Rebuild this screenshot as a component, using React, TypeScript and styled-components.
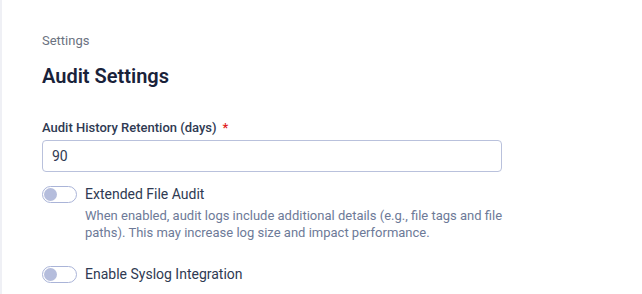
import React, { useState } from 'react';
import styled, { createGlobalStyle } from 'styled-components';

const GlobalStyle = createGlobalStyle`
  html, body {
    margin: 0;
    padding: 0;
    background: #ffffff;
    font-family: Roboto, 'Liberation Sans', Arial, sans-serif;
  }
`;

const Page = styled.div`
  display: flex;
  min-height: 294px;
  overflow: hidden;
`;

const EdgeStrip = styled.div`
  width: 2px;
  flex-shrink: 0;
  background: #eff0f5;
`;

const Content = styled.main`
  flex: 1;
  padding: 33px 0 0 40px;
`;

const Breadcrumb = styled.div`
  font-size: 13px;
  line-height: 16px;
  color: #6b7280;
`;

const Title = styled.h1`
  margin: 15px 0 0;
  font-size: 20px;
  line-height: 24px;
  font-weight: 600;
  color: #19223a;
`;

const Field = styled.div`
  margin-top: 32px;
  width: 460px;
`;

const Label = styled.label`
  display: block;
  font-size: 13px;
  line-height: 16px;
  font-weight: 500;
  color: #2f3a52;
`;

const Required = styled.span`
  color: #e11d1d;
  margin-left: 6px;
`;

const TextInput = styled.input`
  box-sizing: border-box;
  display: block;
  width: 460px;
  height: 32px;
  margin-top: 4px;
  padding: 0 9px;
  border: 1px solid #b9c1dc;
  border-radius: 4px;
  font-family: inherit;
  font-size: 14px;
  color: #2f3a52;
  outline: none;
`;

const ToggleRow = styled.div<{ $gap: number }>`
  display: flex;
  gap: 8px;
  margin-top: ${p => p.$gap}px;
`;

const Track = styled.button<{ $on: boolean }>`
  box-sizing: border-box;
  width: 35px;
  height: 17px;
  flex-shrink: 0;
  margin-top: 1px;
  padding: 0 1px;
  border: 1px solid #aab4d8;
  border-radius: 9px;
  background: ${p => (p.$on ? '#5b6fc4' : '#ffffff')};
  display: flex;
  align-items: center;
  justify-content: ${p => (p.$on ? 'flex-end' : 'flex-start')};
  cursor: pointer;
`;

const Knob = styled.span<{ $on: boolean }>`
  width: 13px;
  height: 13px;
  border-radius: 50%;
  background: ${p => (p.$on ? '#ffffff' : '#b5bddc')};
`;

const ToggleText = styled.div`
  display: flex;
  flex-direction: column;
`;

const ToggleLabel = styled.span`
  font-size: 14px;
  line-height: 18px;
  color: #2f3a52;
`;

const Help = styled.p`
  margin: 4px 0 0;
  width: 420px;
  font-size: 13px;
  line-height: 17px;
  color: #6d7a98;
`;

type ToggleProps = {
  label: string;
  help?: string;
  gap: number;
};

const Toggle: React.FC<ToggleProps> = ({ label, help, gap }) => {
  const [on, setOn] = useState(false);
  return (
    <ToggleRow $gap={gap}>
      <Track $on={on} onClick={() => setOn(!on)} aria-pressed={on}>
        <Knob $on={on} />
      </Track>
      <ToggleText>
        <ToggleLabel>{label}</ToggleLabel>
        {help && <Help>{help}</Help>}
      </ToggleText>
    </ToggleRow>
  );
};

const App: React.FC = () => {
  const [days, setDays] = useState('90');

  return (
    <Page>
      <GlobalStyle />
      <EdgeStrip />
      <Content>
        <Breadcrumb>Settings</Breadcrumb>
        <Title>Audit Settings</Title>
        <Field>
          <Label>
            Audit History Retention (days)
            <Required>*</Required>
          </Label>
          <TextInput value={days} onChange={e => setDays(e.target.value)} />
        </Field>
        <Toggle
          gap={13}
          label="Extended File Audit"
          help="When enabled, audit logs include additional details (e.g., file tags and file paths). This may increase log size and impact performance."
        />
        <Toggle gap={24} label="Enable Syslog Integration" />
      </Content>
    </Page>
  );
};

export default App;
